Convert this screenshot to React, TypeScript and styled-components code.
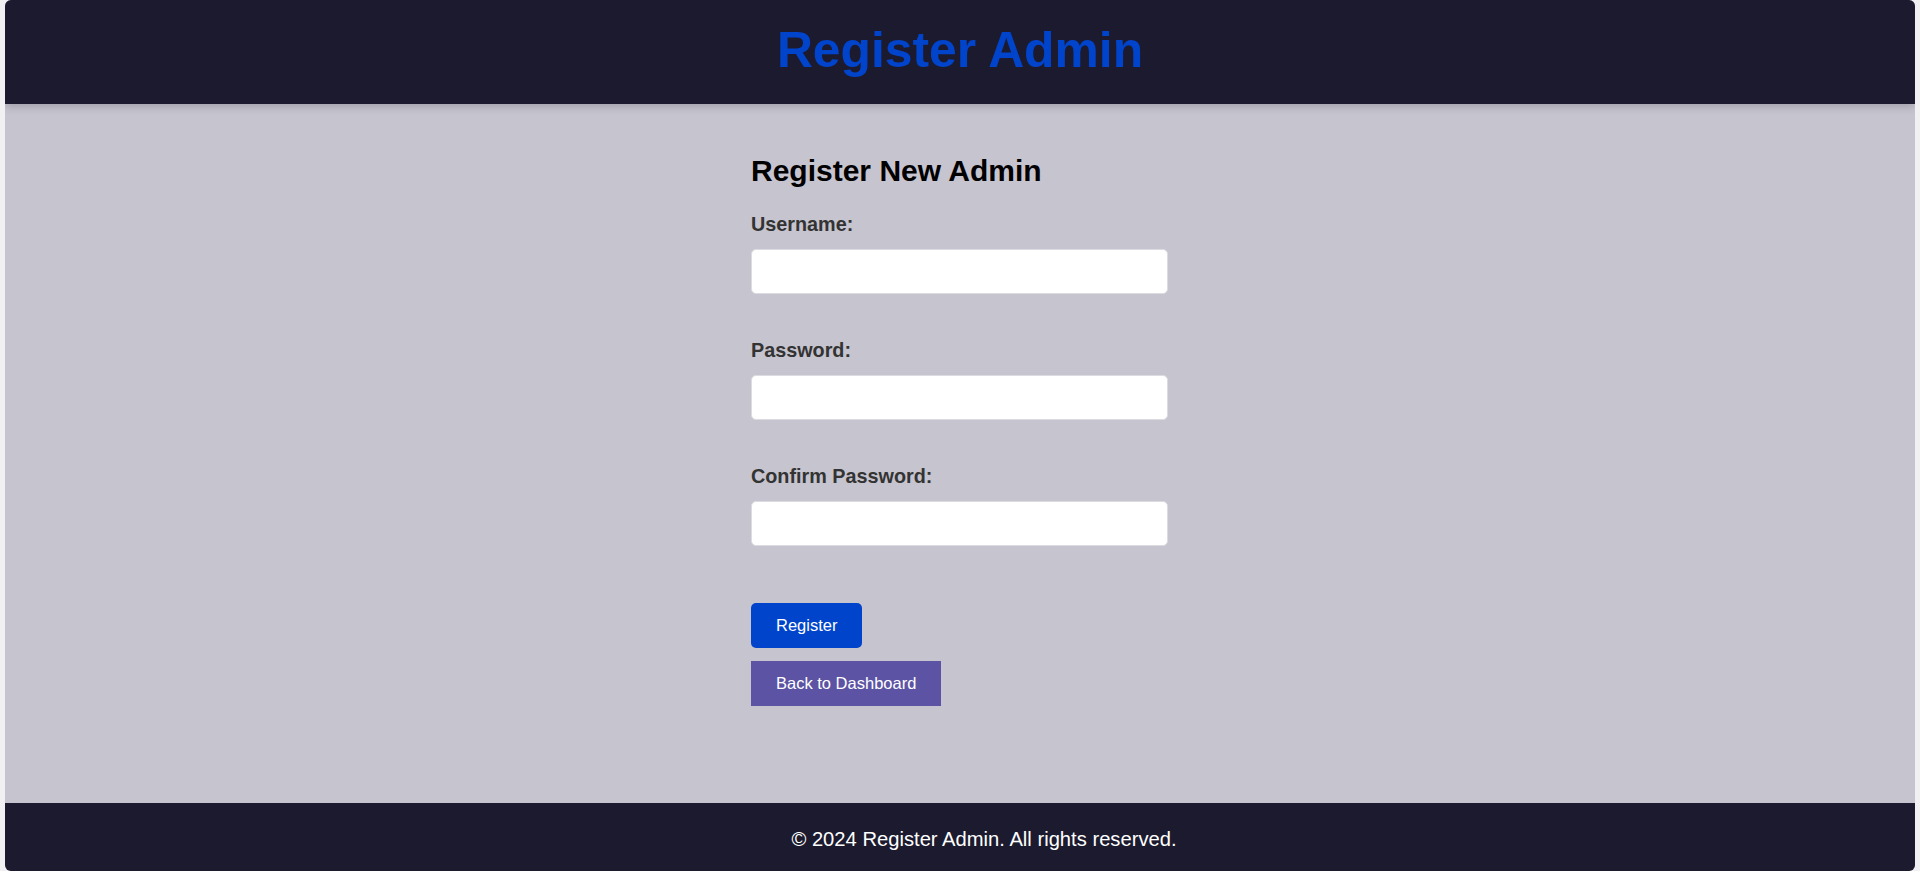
import React, { useState } from "react";
import styled, { createGlobalStyle } from "styled-components";

const GlobalStyle = createGlobalStyle`
  html, body {
    margin: 0;
    padding: 0;
    background: #f1f1f3;
    font-family: "Liberation Sans", Arial, sans-serif;
  }

  * {
    box-sizing: border-box;
  }
`;

const Page = styled.div`
  display: flex;
  flex-direction: column;
  height: 100vh;
  margin: 0 5px;
  border-radius: 6px;
  overflow: hidden;
  background: #c6c4cf;
`;

const Header = styled.header`
  position: relative;
  z-index: 1;
  background: #1c1a2e;
  padding: 22px 0 26px;
  text-align: center;
  box-shadow: 0 3px 8px rgba(0, 0, 0, 0.18);
`;

const SiteTitle = styled.h1`
  margin: 0;
  font-size: 49.8px;
  line-height: 56px;
  font-weight: 700;
  color: #0044cc;
`;

const Main = styled.main`
  flex: 1;
  display: flex;
  justify-content: center;
  padding-top: 50px;
  padding-right: 1px;
`;

const Form = styled.form`
  display: flex;
  flex-direction: column;
  width: 417px;
`;

const Title = styled.h2`
  margin: 0 0 25px;
  font-size: 30px;
  line-height: 34px;
  font-weight: 700;
  color: #000000;
`;

const Field = styled.div`
  display: flex;
  flex-direction: column;
  margin-bottom: 45px;

  &:last-of-type {
    margin-bottom: 57px;
  }
`;

const Label = styled.label`
  margin-bottom: 13px;
  font-size: 19.8px;
  line-height: 23px;
  font-weight: 700;
  color: #333333;
`;

const TextInput = styled.input`
  height: 45px;
  width: 100%;
  padding: 0 12px;
  border: 1px solid #dcdbe2;
  border-radius: 5px;
  background: #ffffff;
  font-size: 16px;
  font-family: "Liberation Sans", Arial, sans-serif;
  outline: none;
`;

const Button = styled.button<{ $variant?: "primary" | "secondary" }>`
  align-self: flex-start;
  height: 45px;
  padding: 0 25px;
  margin-bottom: 13px;
  border: none;
  border-radius: ${p => (p.$variant === "secondary" ? "0" : "5px")};
  background: ${p => (p.$variant === "secondary" ? "#5c53a4" : "#0044cc")};
  color: #ffffff;
  font-size: 16.5px;
  font-family: "Liberation Sans", Arial, sans-serif;
  cursor: pointer;
`;

const Footer = styled.footer`
  width: 100%;
  box-sizing: content-box;
  padding: 25px 24px 21px;
  background: #1c1a2e;
  color: #ffffff;
  text-align: center;
  font-size: 20.2px;
  line-height: 22px;
`;

const App: React.FC = () => {
  const [username, setUsername] = useState("");
  const [password, setPassword] = useState("");
  const [confirm, setConfirm] = useState("");

  return (
    <>
      <GlobalStyle />
      <Page>
        <Header>
          <SiteTitle>Register Admin</SiteTitle>
        </Header>
        <Main>
          <Form onSubmit={event => event.preventDefault()}>
            <Title>Register New Admin</Title>
            <Field>
              <Label htmlFor="username">Username:</Label>
              <TextInput
                id="username"
                type="text"
                value={username}
                onChange={event => setUsername(event.target.value)}
              />
            </Field>
            <Field>
              <Label htmlFor="password">Password:</Label>
              <TextInput
                id="password"
                type="password"
                value={password}
                onChange={event => setPassword(event.target.value)}
              />
            </Field>
            <Field>
              <Label htmlFor="confirm">Confirm Password:</Label>
              <TextInput
                id="confirm"
                type="password"
                value={confirm}
                onChange={event => setConfirm(event.target.value)}
              />
            </Field>
            <Button type="submit">Register</Button>
            <Button type="button" $variant="secondary">
              Back to Dashboard
            </Button>
          </Form>
        </Main>
        <Footer>© 2024 Register Admin. All rights reserved.</Footer>
      </Page>
    </>
  );
};

export default App;
